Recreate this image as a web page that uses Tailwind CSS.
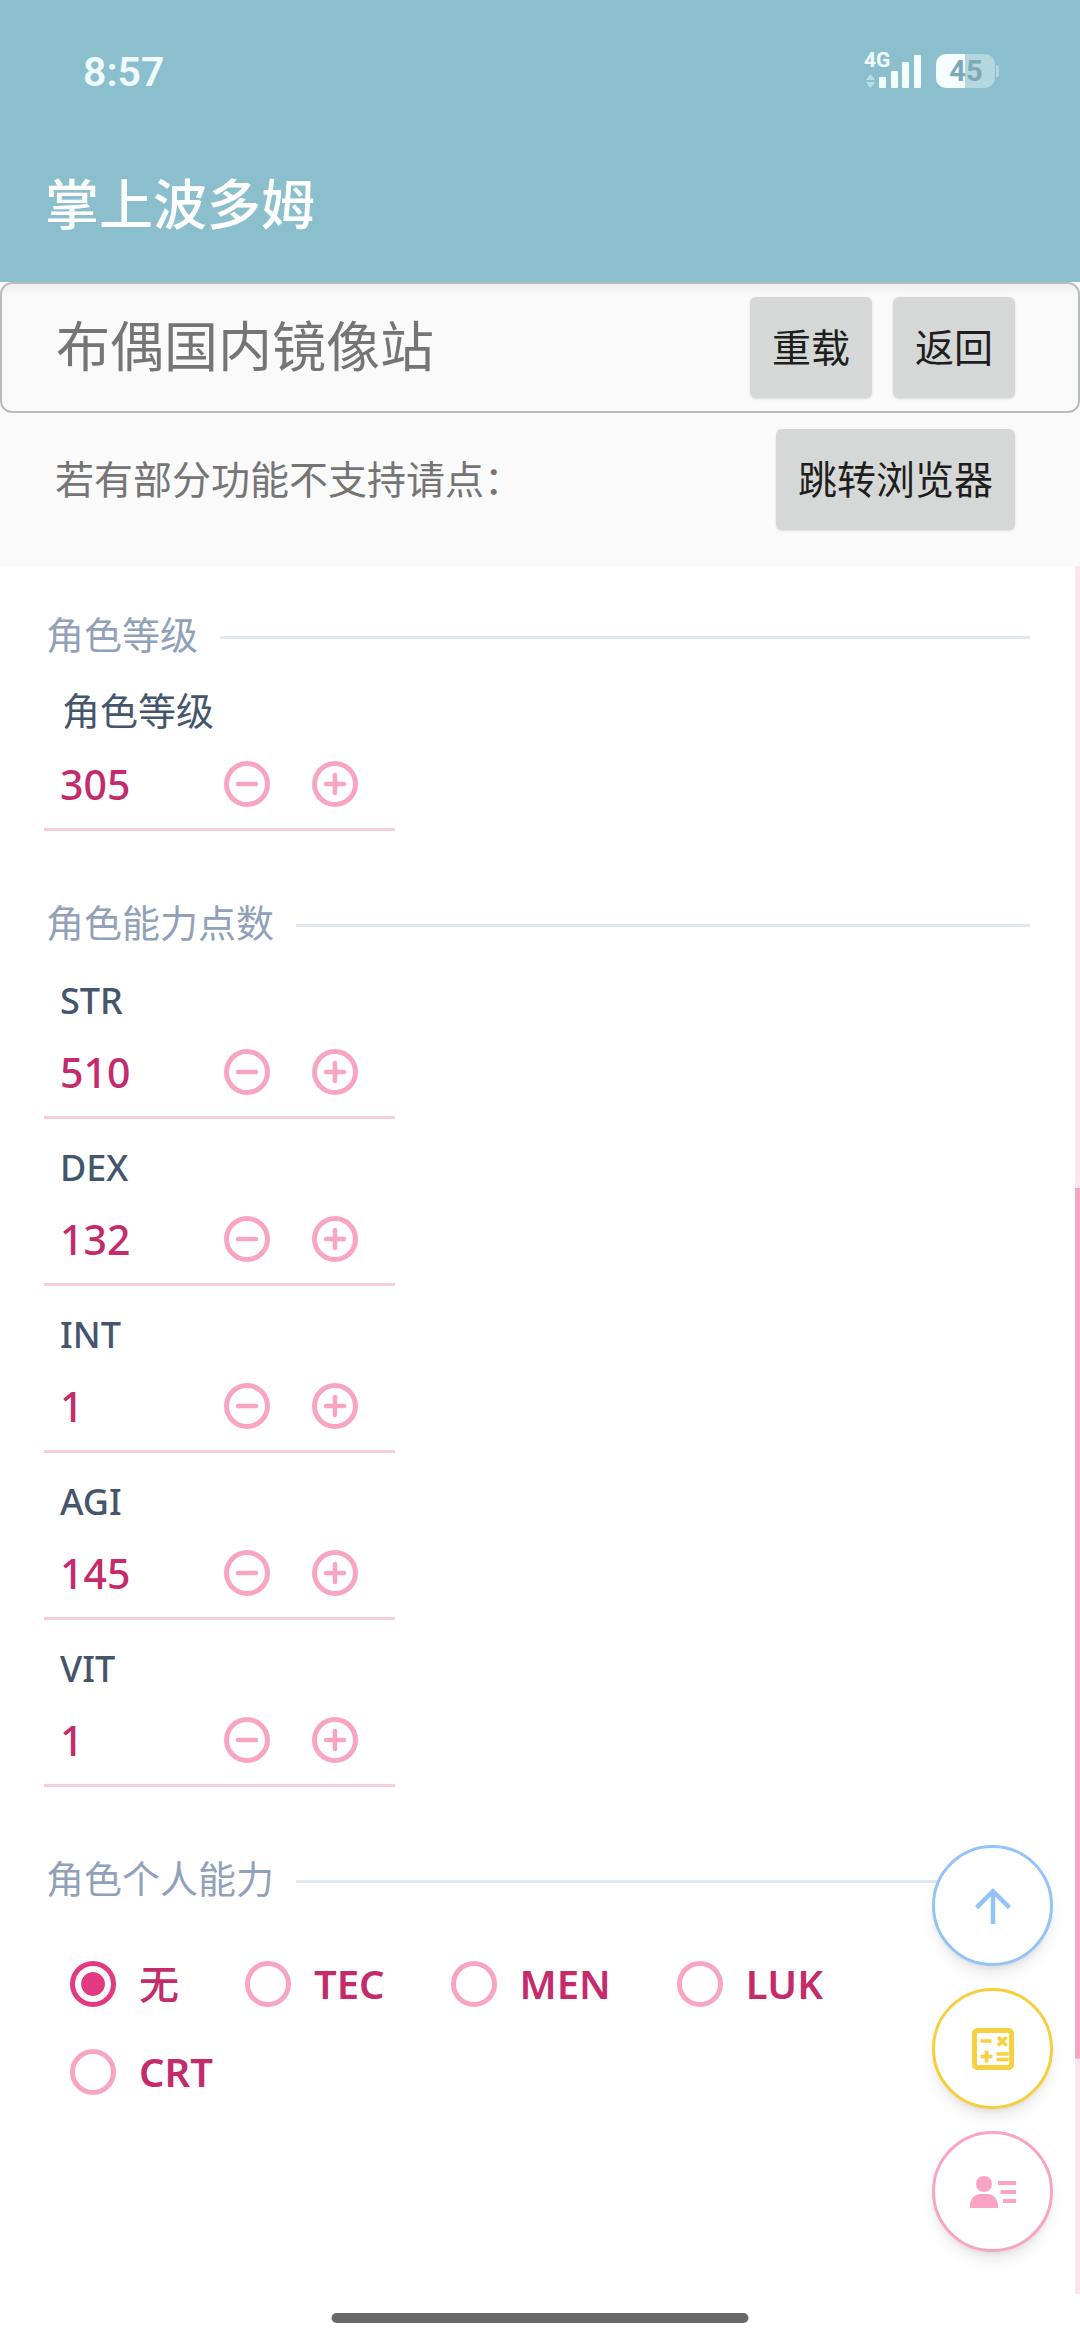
<!DOCTYPE html>
<html lang="zh-CN">
  <head>
    <meta charset="UTF-8" />
    <meta name="viewport" content="width=device-width, initial-scale=1.0" />
    <title>掌上波多姆</title>
    <script src="https://cdn.jsdelivr.net/npm/@tailwindcss/browser@4"></script>
  </head>
  <body class="bg-white font-['Noto_Sans','Noto_Sans_CJK_SC',sans-serif] antialiased">
    <svg class="hidden" aria-hidden="true">
      <symbol id="minus" viewBox="0 0 46 46">
        <g fill="none" stroke="currentColor" stroke-width="5" stroke-linecap="round">
          <circle cx="23" cy="23" r="20.5" />
          <path d="M14 23h18" stroke-width="4.5" />
        </g>
      </symbol>
      <symbol id="plus" viewBox="0 0 46 46">
        <g fill="none" stroke="currentColor" stroke-width="5" stroke-linecap="round">
          <circle cx="23" cy="23" r="20.5" />
          <path d="M14 23h18M23 14v18" stroke-width="4.5" />
        </g>
      </symbol>
    </svg>

    <div class="relative min-h-screen flex flex-col">
      <header class="bg-[#8bbfce] text-white">
        <!-- status bar -->
        <div class="flex items-center justify-between h-[144px] pl-[83px] pr-[80px]">
          <span class="font-[Roboto] font-semibold text-[41px] leading-none text-[#f0fbff]">8:57</span>
          <div class="flex items-end gap-[14px]">
            <svg class="w-[58px] h-[46px] overflow-visible" viewBox="0 0 58 46" role="img" aria-label="4G">
              <text x="0" y="18" fill="#f3fcff" font-family="Roboto" font-weight="700" font-size="21">4G</text>
              <path d="M2 31l4.500-6 4.500 6zM2 33l4.500 6 4.500-6z" fill="#bbdde6" />
              <g fill="#f3fcff">
                <rect x="15" y="28" width="7" height="11" rx="1" />
                <rect x="27" y="22" width="7" height="17" rx="1" />
                <rect x="38" y="13" width="7" height="26" rx="1" />
                <rect x="50" y="6" width="7" height="33" rx="1" />
              </g>
            </svg>
            <svg class="w-[64px] h-[46px]" viewBox="0 0 64 46" role="img" aria-label="45%">
              <rect x="0" y="5" width="59" height="34" rx="10" fill="#b4d6df" />
              <path d="M29 5H10A10 10 0 0 0 0 15V29A10 10 0 0 0 10 39H29z" fill="#f5fdff" />
              <path d="M60 16h1a2 2 0 0 1 2 2v8a2 2 0 0 1-2 2h-1z" fill="#b4d6df" />
              <text x="30" y="32" text-anchor="middle" fill="#7ba9b8" font-family="Roboto" font-weight="700" font-size="29">45</text>
            </svg>
          </div>
        </div>
        <h1 class="h-[138px] pl-[45px] pt-[20px] text-[54px] leading-[80px] font-medium">掌上波多姆</h1>
      </header>

      <section class="bg-[#fafafa] h-[284px]">
        <div class="flex items-center gap-[21px] h-[131px] pl-[54px] pr-[63px] border-2 border-[#b9bcbb] rounded-xl bg-linear-to-b from-[#eeeeec] to-[#fafafa] to-10%">
          <h2 class="flex-1 pb-[4px] text-[54px] leading-none text-[#757575]">布偶国内镜像站</h2>
          <button type="button" class="h-[101px] px-[22px] rounded-md bg-[#d6d8d7] text-[39px] text-[#1e1e1e] shadow">重载</button>
          <button type="button" class="h-[101px] px-[22px] rounded-md bg-[#d6d8d7] text-[39px] text-[#1e1e1e] shadow">返回</button>
        </div>
        <div class="flex items-center justify-between pt-[16px] pl-[55px] pr-[65px]">
          <p class="pb-[2px] text-[39px] leading-none text-[#757575]">若有部分功能不支持请点：</p>
          <button type="button" class="h-[101px] px-[22px] rounded-md bg-[#d6d8d7] text-[39px] text-[#1e1e1e] shadow">跳转浏览器</button>
        </div>
      </section>

      <main class="relative flex-1 mb-[45px] pl-[44px] pr-[50px] pt-[47px]">
        <section>
          <h3 class="flex items-center gap-[22px] h-[48px] pl-[2px] text-[38px] text-slate-400 after:h-[3px] after:flex-1 after:bg-slate-200"><span class="pb-[5px] leading-[43px]">角色等级</span></h3>
          <div class="w-[351px] h-[170px] border-b-3 border-[#f7cfdc]">
            <label for="level" class="block h-[100px] pl-[18px] pt-[25px] text-[38px] leading-[48px] text-slate-600">角色等级</label>
            <div class="flex items-center gap-[42px] h-[46px] pl-[16px] text-[#f8a5c2]">
              <input id="level" type="text" inputmode="numeric" value="305" class="w-[122px] text-[41px] leading-[46px] font-medium text-[#c42b6b] outline-none" />
              <button type="button" aria-label="减少" onclick="step('level', -1)"><svg class="size-[46px]"><use href="#minus" /></svg></button>
              <button type="button" aria-label="增加" onclick="step('level', 1)"><svg class="size-[46px]"><use href="#plus" /></svg></button>
            </div>
          </div>
        </section>

        <section class="mt-[70px]">
          <h3 class="flex items-center gap-[22px] h-[48px] pl-[2px] text-[38px] text-slate-400 after:h-[3px] after:flex-1 after:bg-slate-200"><span class="pb-[5px] leading-[43px]">角色能力点数</span></h3>
          <div id="stats"></div>
        </section>

        <section class="mt-[70px]">
          <h3 class="flex items-center gap-[22px] h-[48px] pl-[2px] text-[38px] text-slate-400 after:h-[3px] after:flex-1 after:bg-slate-200"><span class="pb-[5px] leading-[43px]">角色个人能力</span></h3>
          <div class="flex flex-wrap gap-x-[66px] gap-y-[40px] pt-[55px] pl-[26px] pr-[160px] text-[40px] leading-[48px] font-semibold text-[#c42b6b]">
            <label class="flex items-center gap-[23px]">
              <input type="radio" name="personal" checked class="appearance-none size-[46px] rounded-full border-5 border-[#f8a5c2] checked:border-[#e23a80] checked:bg-radial checked:from-[#e23a80] checked:from-45% checked:to-transparent checked:to-48%" />
              <span class="font-medium">无</span>
            </label>
            <label class="flex items-center gap-[23px]">
              <input type="radio" name="personal" class="appearance-none size-[46px] rounded-full border-5 border-[#f8a5c2] checked:border-[#e23a80] checked:bg-radial checked:from-[#e23a80] checked:from-45% checked:to-transparent checked:to-48%" />
              TEC
            </label>
            <label class="flex items-center gap-[23px]">
              <input type="radio" name="personal" class="appearance-none size-[46px] rounded-full border-5 border-[#f8a5c2] checked:border-[#e23a80] checked:bg-radial checked:from-[#e23a80] checked:from-45% checked:to-transparent checked:to-48%" />
              MEN
            </label>
            <label class="flex items-center gap-[23px]">
              <input type="radio" name="personal" class="appearance-none size-[46px] rounded-full border-5 border-[#f8a5c2] checked:border-[#e23a80] checked:bg-radial checked:from-[#e23a80] checked:from-45% checked:to-transparent checked:to-48%" />
              LUK
            </label>
            <label class="flex items-center gap-[23px]">
              <input type="radio" name="personal" class="appearance-none size-[46px] rounded-full border-5 border-[#f8a5c2] checked:border-[#e23a80] checked:bg-radial checked:from-[#e23a80] checked:from-45% checked:to-transparent checked:to-48%" />
              CRT
            </label>
          </div>
        </section>

        <!-- scrollbar -->
        <div class="absolute right-0 inset-y-0 w-[5px] bg-[#fde4ed]">
          <div class="absolute top-[36%] bottom-[235px] w-full rounded-b-sm bg-[#f9a3c1]"></div>
        </div>
      </main>

      <!-- floating buttons -->
      <div class="absolute right-[27px] bottom-[87px] flex flex-col gap-[22px]">
        <button type="button" aria-label="回到顶部" class="flex items-center justify-center size-[121px] rounded-full border-3 border-[#94c4f7] bg-white text-[#94c4f7] shadow-lg">
          <svg class="size-[54px]" viewBox="0 0 24 24" fill="currentColor"><path d="M11 20V7.825l-5.600 5.600L4 12l8-8 8 8-1.400 1.425-5.600-5.600V20z" /></svg>
        </button>
        <button type="button" aria-label="计算器" class="flex items-center justify-center size-[121px] rounded-full border-3 border-[#f5cf3d] bg-white text-[#f9d043] shadow-lg">
          <svg class="size-[42px]" viewBox="0 0 42 42" fill="none" stroke="currentColor" stroke-width="3.600">
            <rect x="2.500" y="2.500" width="37" height="37" rx="3" stroke-width="5" />
            <path d="M8.500 13h11M8.500 28.500h12M14.500 22.500v12M24.500 26h12M24.500 31.500h12M26 9l8.500 8.500M34.500 9L26 17.500" />
          </svg>
        </button>
        <button type="button" aria-label="角色列表" class="flex items-center justify-center size-[121px] rounded-full border-3 border-[#f8a5c2] bg-white text-[#fba3c3] shadow-lg">
          <svg class="w-[46px] h-[34px]" viewBox="0 0 46 34" fill="currentColor">
            <circle cx="14" cy="9" r="8" />
            <path d="M0 33v-2.500C0 23.500 5 19 11 19h6c6 0 11 4.500 11 11.500V33zM28 6h18v4H28zM30.500 15H46v4H30.500zM33 24h13v4H33z" />
          </svg>
        </button>
      </div>

      <!-- home indicator -->
      <div class="absolute bottom-[16px] left-1/2 -translate-x-1/2 w-[417px] h-[10px] rounded-full bg-[#696969]"></div>
    </div>

    <script>
      const stats = [
        ["STR", 510],
        ["DEX", 132],
        ["INT", 1],
        ["AGI", 145],
        ["VIT", 1],
      ];

      document.getElementById("stats").innerHTML = stats
        .map(
          ([name, value], index) => `
          <div class="w-[351px] ${index ? "h-[167px]" : "h-[170px]"} flex flex-col justify-end border-b-3 border-[#f7cfdc]">
            <label for="${name}" class="block h-[72px] pl-[16px] text-[36px] leading-[48px] font-medium text-slate-600">${name}</label>
            <div class="flex items-center gap-[42px] h-[46px] mb-[21px] pl-[16px] text-[#f8a5c2]">
              <input id="${name}" type="text" inputmode="numeric" value="${value}" class="w-[122px] text-[41px] leading-[46px] font-medium text-[#c42b6b] outline-none" />
              <button type="button" aria-label="减少 ${name}" onclick="step('${name}', -1)"><svg class="size-[46px]"><use href="#minus" /></svg></button>
              <button type="button" aria-label="增加 ${name}" onclick="step('${name}', 1)"><svg class="size-[46px]"><use href="#plus" /></svg></button>
            </div>
          </div>`
        )
        .join("");

      function step(id, amount) {
        const input = document.getElementById(id);
        input.value = Math.max(1, (parseInt(input.value) || 0) + amount);
      }
    </script>
  </body>
</html>
